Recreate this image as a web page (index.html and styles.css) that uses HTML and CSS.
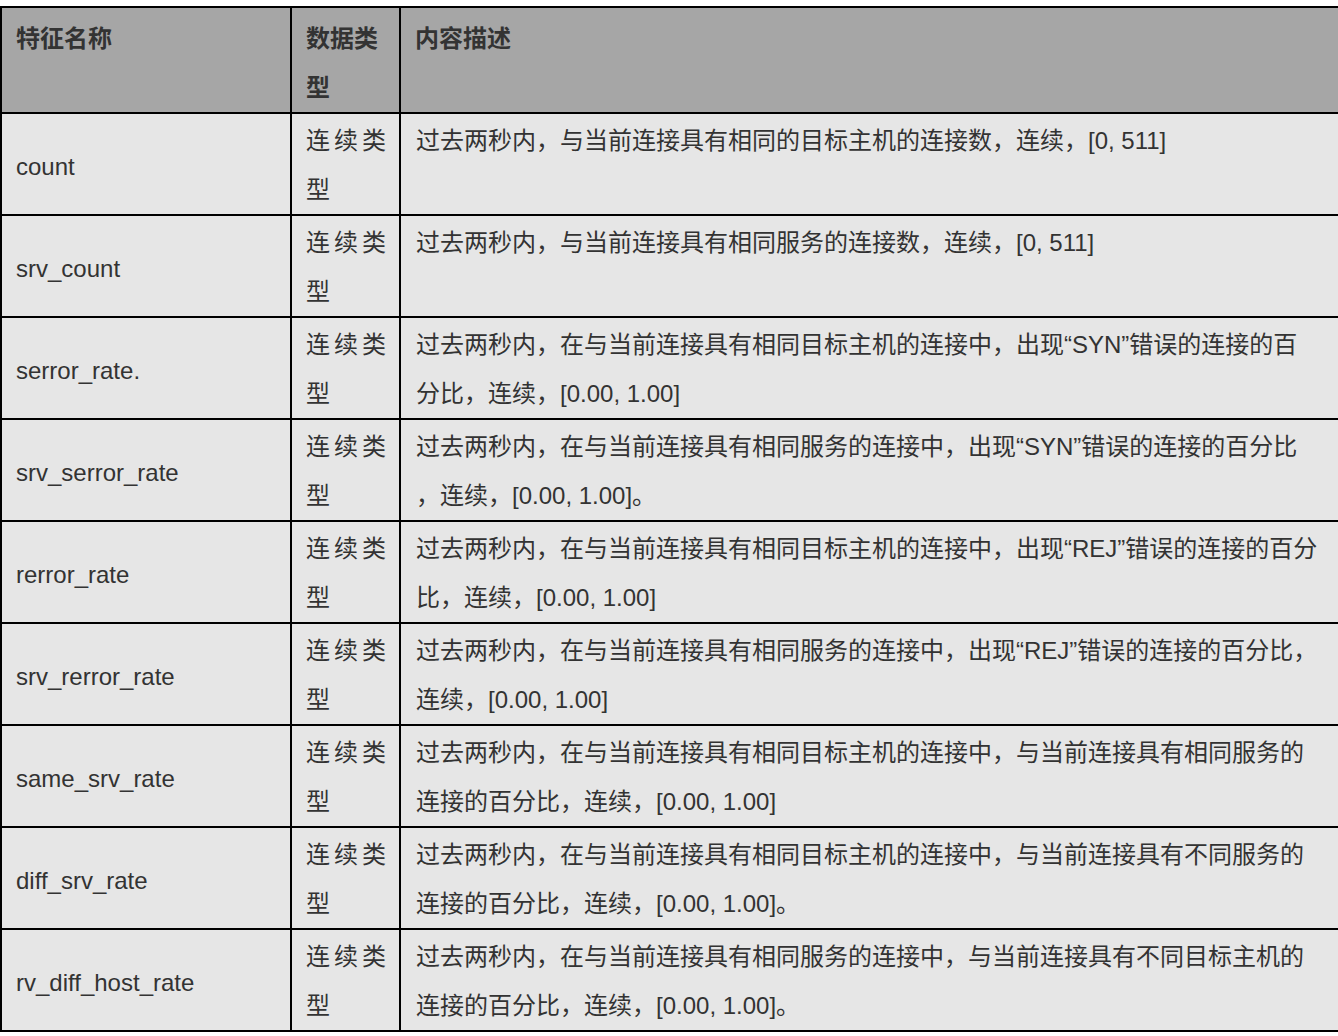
FILE: index.html
```html
<!DOCTYPE html>
<html lang="zh-CN">
<head>
<meta charset="utf-8">
<title>特征说明</title>
<link rel="stylesheet" href="styles.css">
</head>
<body>
<table class="feature-table">
  <thead>
    <tr>
      <th class="col-name">特征名称</th>
      <th class="col-type">数据类型</th>
      <th class="col-desc">内容描述</th>
    </tr>
  </thead>
  <tbody>
    <tr>
      <td class="name">count</td>
      <td class="type">连续类型</td>
      <td class="desc">过去两秒内，与当前连接具有相同的目标主机的连接数，连续，[0, 511]</td>
    </tr>
    <tr>
      <td class="name">srv_count</td>
      <td class="type">连续类型</td>
      <td class="desc">过去两秒内，与当前连接具有相同服务的连接数，连续，[0, 511]</td>
    </tr>
    <tr>
      <td class="name">serror_rate.</td>
      <td class="type">连续类型</td>
      <td class="desc">过去两秒内，在与当前连接具有相同目标主机的连接中，出现“SYN”错误的连接的百<br>分比，连续，[0.00, 1.00]</td>
    </tr>
    <tr>
      <td class="name">srv_serror_rate</td>
      <td class="type">连续类型</td>
      <td class="desc">过去两秒内，在与当前连接具有相同服务的连接中，出现“SYN”错误的连接的百分比<br>，连续，[0.00, 1.00]。</td>
    </tr>
    <tr>
      <td class="name">rerror_rate</td>
      <td class="type">连续类型</td>
      <td class="desc">过去两秒内，在与当前连接具有相同目标主机的连接中，出现“REJ”错误的连接的百分<br>比，连续，[0.00, 1.00]</td>
    </tr>
    <tr>
      <td class="name">srv_rerror_rate</td>
      <td class="type">连续类型</td>
      <td class="desc">过去两秒内，在与当前连接具有相同服务的连接中，出现“REJ”错误的连接的百分比，<br>连续，[0.00, 1.00]</td>
    </tr>
    <tr>
      <td class="name">same_srv_rate</td>
      <td class="type">连续类型</td>
      <td class="desc">过去两秒内，在与当前连接具有相同目标主机的连接中，与当前连接具有相同服务的<br>连接的百分比，连续，[0.00, 1.00]</td>
    </tr>
    <tr>
      <td class="name">diff_srv_rate</td>
      <td class="type">连续类型</td>
      <td class="desc">过去两秒内，在与当前连接具有相同目标主机的连接中，与当前连接具有不同服务的<br>连接的百分比，连续，[0.00, 1.00]。</td>
    </tr>
    <tr>
      <td class="name">rv_diff_host_rate</td>
      <td class="type">连续类型</td>
      <td class="desc">过去两秒内，在与当前连接具有相同服务的连接中，与当前连接具有不同目标主机的<br>连接的百分比，连续，[0.00, 1.00]。</td>
    </tr>
  </tbody>
</table>
</body>
</html>
```

FILE: styles.css
```css
html, body {
  margin: 0;
  padding: 0;
  background: #ffffff;
  overflow: hidden;
}

body {
  padding-top: 6px;
  font-family: "Liberation Sans", "Noto Sans CJK SC", sans-serif;
  font-size: 24px;
  color: #333333;
}

.feature-table {
  border-collapse: separate;
  border-spacing: 0;
  table-layout: fixed;
  width: 1354px;
  border-top: 2px solid #000;
  border-left: 2px solid #000;
  line-height: 48.5px;
}

.feature-table th,
.feature-table td {
  box-sizing: border-box;
  border-right: 2px solid #000;
  border-bottom: 2px solid #000;
  padding: 3px 13px 0 14px;
  vertical-align: top;
  text-align: left;
}

.feature-table th {
  background: #a6a6a6;
  font-weight: bold;
  padding-top: 7px;
}

.feature-table td {
  background: #e6e6e6;
}

.col-name { width: 290px; }
.col-type { width: 109px; }
.col-desc { width: 953px; padding-left: 15px; }

.feature-table td.name {
  vertical-align: middle;
  padding-top: 6px;
}

.feature-table td.type {
  text-align: justify;
}

.feature-table td.desc {
  padding-left: 15px;
  white-space: nowrap;
}
```
